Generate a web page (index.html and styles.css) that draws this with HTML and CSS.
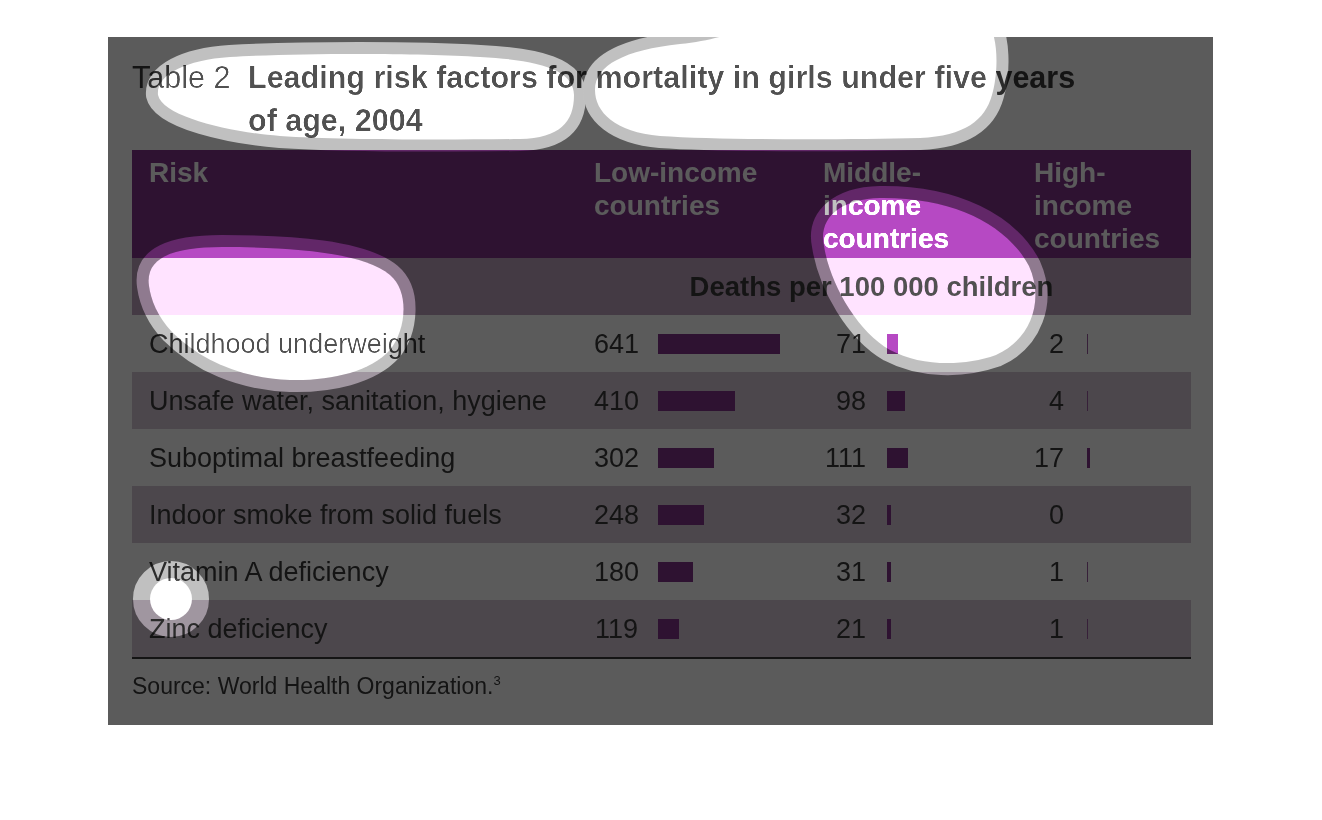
FILE: index.html
```html
<!DOCTYPE html>
<html lang="en">
<head>
<meta charset="utf-8">
<title>Table 2 – Leading risk factors for mortality in girls under five years of age, 2004</title>
<link rel="stylesheet" href="styles.css">
</head>
<body>
<div class="stage">
  <div class="title">
    <div class="title-label">Table 2</div>
    <div class="title-text">Leading risk factors for mortality in girls under five years of age, 2004</div>
  </div>

  <div class="table">
    <div class="head">
      <div class="risk">Risk</div>
      <div>Low-income<br>countries</div>
      <div>Middle-<br>income<br>countries</div>
      <div>High-<br>income<br>countries</div>
    </div>
    <div class="sub">
      <div class="sub-label">Deaths per 100 000 children</div>
    </div>

    <div class="row">
      <div class="risk">Childhood underweight</div>
      <div class="cell low"><span class="num">641</span><span class="bar" style="width:122px"></span></div>
      <div class="cell mid"><span class="num">71</span><span class="bar" style="width:11px"></span></div>
      <div class="cell high"><span class="num">2</span><span class="bar thin" style="width:1px"></span></div>
    </div>
    <div class="row alt">
      <div class="risk">Unsafe water, sanitation, hygiene</div>
      <div class="cell low"><span class="num">410</span><span class="bar" style="width:77px"></span></div>
      <div class="cell mid"><span class="num">98</span><span class="bar" style="width:18px"></span></div>
      <div class="cell high"><span class="num">4</span><span class="bar thin" style="width:1px"></span></div>
    </div>
    <div class="row">
      <div class="risk">Suboptimal breastfeeding</div>
      <div class="cell low"><span class="num">302</span><span class="bar" style="width:56px"></span></div>
      <div class="cell mid"><span class="num">111</span><span class="bar" style="width:21px"></span></div>
      <div class="cell high"><span class="num">17</span><span class="bar" style="width:3px"></span></div>
    </div>
    <div class="row alt">
      <div class="risk">Indoor smoke from solid fuels</div>
      <div class="cell low"><span class="num">248</span><span class="bar" style="width:46px"></span></div>
      <div class="cell mid"><span class="num">32</span><span class="bar" style="width:4px"></span></div>
      <div class="cell high"><span class="num">0</span></div>
    </div>
    <div class="row">
      <div class="risk">Vitamin A deficiency</div>
      <div class="cell low"><span class="num">180</span><span class="bar" style="width:35px"></span></div>
      <div class="cell mid"><span class="num">31</span><span class="bar" style="width:4px"></span></div>
      <div class="cell high"><span class="num">1</span><span class="bar thin" style="width:1px"></span></div>
    </div>
    <div class="row alt">
      <div class="risk">Zinc deficiency</div>
      <div class="cell low"><span class="num">119</span><span class="bar" style="width:21px"></span></div>
      <div class="cell mid"><span class="num">21</span><span class="bar" style="width:4px"></span></div>
      <div class="cell high"><span class="num">1</span><span class="bar thin" style="width:1px"></span></div>
    </div>
    <div class="rule"></div>
  </div>

  <p class="source">Source: World Health Organization.<sup>3</sup></p>

  <svg class="overlay dodge" width="1105" height="688" viewBox="0 0 1105 688" aria-hidden="true">
    <defs>
      <path id="bA" d="M158 95 C156 75 185 60 230 57 C300 53 420 53 480 57 C540 60 574 70 574 95 C574 122 560 138 520 139 C440 140 340 140 280 136 C230 132 163 117 158 95 Z"/>
      <path id="bB" d="M595 90 C595 65 625 50 680 44 C720 40 740 30 780 18 L985 18 C1000 35 998 75 992 95 C985 120 965 136 920 138 C840 140 720 140 660 136 C615 132 595 112 595 90 Z"/>
      <path id="bC" d="M149 286 C145 258 172 247 222 247 C292 247 362 252 390 275 C410 292 406 330 390 350 C370 372 330 381 290 380 C240 378 200 360 172 332 C157 316 151 300 149 286 Z"/>
      <path id="bD" d="M824 246 C818 218 840 199 880 198 C955 197 1008 226 1029 266 C1045 302 1030 340 996 355 C962 367 920 366 890 350 C857 331 830 284 824 246 Z"/>
      <circle id="bE" cx="171" cy="599" r="21"/>
    </defs>
    <g transform="translate(-108 -37)" fill="#494949">
      <use href="#bA"/>
      <use href="#bB"/>
      <use href="#bC"/>
      <use href="#bD"/>
      <use href="#bE"/>
    </g>
  </svg>

  <svg class="overlay" width="1105" height="688" viewBox="0 0 1105 688" aria-hidden="true">
    <defs>
      <mask id="shadeMask" maskUnits="userSpaceOnUse" x="0" y="0" width="1105" height="688">
        <rect width="1105" height="688" fill="#fff"/>
        <g transform="translate(-108 -37)">
          <g fill="#626262" stroke="#626262" stroke-width="24" stroke-linejoin="round">
            <use href="#bA"/>
            <use href="#bB"/>
            <use href="#bC"/>
            <use href="#bD"/>
          </g>
          <use href="#bE" fill="#626262" stroke="#626262" stroke-width="34"/>
          <g fill="#000">
            <use href="#bA"/>
            <use href="#bB"/>
            <use href="#bC"/>
            <use href="#bD"/>
            <use href="#bE"/>
          </g>
        </g>
      </mask>
    </defs>
    <rect width="1105" height="688" fill="#000" fill-opacity="0.643" mask="url(#shadeMask)"/>
  </svg>
</div>
</body>
</html>
```

FILE: styles.css
```css
html, body {
  margin: 0;
  padding: 0;
  background: #ffffff;
}

body {
  font-family: "Liberation Sans", Arial, sans-serif;
  color: #3a3a3a;
}

.stage {
  position: relative;
  margin: 37px 0 0 108px;
  width: 1105px;
  height: 688px;
  box-sizing: border-box;
  padding: 19px 22px 0 24px;
  background: #ffffff;
  overflow: hidden;
}

/* Title */
.title {
  display: flex;
  height: 86px;
  font-size: 30.5px;
  line-height: 43px;
}

.title-label {
  flex: 0 0 116px;
  font-weight: normal;
}

.title-text {
  width: 860px;
  font-weight: bold;
}

/* Table */
.table {
  margin-top: 8px;
  width: 1059px;
}

.head,
.sub,
.row {
  display: grid;
  grid-template-columns: 462px 229px 211px 157px;
}

.head {
  height: 108px;
  box-sizing: border-box;
  padding-top: 6px;
  background: #82348b;
  color: #ffffff;
  font-weight: bold;
  font-size: 28px;
  line-height: 33px;
}

.risk {
  padding-left: 17px;
}

.sub {
  height: 57px;
  align-items: center;
  background: #bea2be;
  font-weight: bold;
  font-size: 27.5px;
}

.sub-label {
  grid-column: 2 / 5;
  text-align: center;
  padding-right: 42px;
}

.row {
  height: 57px;
  align-items: center;
  font-size: 27px;
  padding-top: 2px;
  box-sizing: border-box;
}

.row.alt {
  background: #d5c7d5;
}

.cell {
  display: flex;
  align-items: center;
}

.num {
  text-align: right;
}

.low .num { width: 44px; margin-right: 20px; }
.mid .num { width: 43px; margin-right: 21px; }
.high .num { width: 30px; margin-right: 23px; }

.bar {
  display: block;
  height: 20px;
  margin-top: -2px;
  background: #82348b;
}

.bar.thin {
  background: #9a5aa0;
}

.rule {
  height: 2px;
  background: #3a3a3a;
}

.source {
  margin: 14px 0 0;
  font-size: 23px;
  line-height: 27px;
}

.source sup {
  font-size: 13px;
  vertical-align: 9px;
  line-height: 0;
}

/* Highlight overlay */
.overlay {
  position: absolute;
  left: 0;
  top: 0;
  pointer-events: none;
}

.dodge {
  mix-blend-mode: color-dodge;
}
```
